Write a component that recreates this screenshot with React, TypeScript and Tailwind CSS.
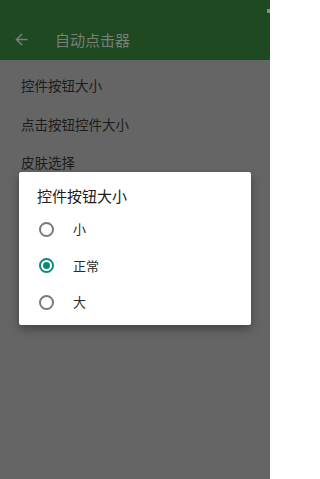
import React from "react";

const font = { fontFamily: '"Noto Sans CJK SC", "Noto Sans", sans-serif' };

function Radio({ checked }: { checked?: boolean }) {
  return (
    <div
      className={
        "w-[15px] h-[15px] rounded-full border-2 flex items-center justify-center " +
        (checked ? "border-[#0b8a7a]" : "border-[#7a7a7a]")
      }
    >
      {checked && <div className="w-[7px] h-[7px] rounded-full bg-[#0b8a7a]" />}
    </div>
  );
}

export default function App() {
  const items = ["小", "正常", "大"];
  return (
    <div className="relative w-[270px] h-[479px] bg-[#656565] overflow-hidden" style={font}>
      <div className="h-[60px] bg-[#1f4a21] flex flex-col">
        <div className="h-[18px] relative">
          <div className="absolute right-0 top-[9px] w-[3px] h-[4px] bg-[#8a8a8a]" />
        </div>
        <div className="h-[42px] flex items-center">
          <svg width="13" height="13" viewBox="0 0 13 13" className="ml-[14.5px]">
            <path d="M12.5 6.5H1.5M7 1L1.5 6.5L7 12" stroke="#7a7f7a" strokeWidth="1.5" fill="none" />
          </svg>
          <span className="ml-[27.5px] text-[15px] text-[#7a7f7a] leading-none">自动点击器</span>
        </div>
      </div>
      <div className="pt-[6px]">
        {["控件按钮大小", "点击按钮控件大小", "皮肤选择"].map((t) => (
          <div key={t} className="h-[38.5px] flex items-center pl-[21px] text-[13.5px] text-[#1c1c1c]">
            {t}
          </div>
        ))}
      </div>
      <div className="absolute left-[19px] top-[172px] w-[232px] h-[153px] bg-white rounded-[2px] shadow-[0_4px_10px_rgba(0,0,0,0.35)] flex flex-col">
        <div className="pt-[14px] pl-[18px] h-[38.75px] text-[15px] leading-[20px] text-[#202020]">控件按钮大小</div>
        {items.map((t, i) => (
          <div key={t} className="h-[36.5px] flex items-center">
            <div className="ml-[19.5px]">
              <Radio checked={i === 1} />
            </div>
            <span className="ml-[19.5px] text-[13px] text-[#2a2a2a]">{t}</span>
          </div>
        ))}
      </div>
    </div>
  );
}
